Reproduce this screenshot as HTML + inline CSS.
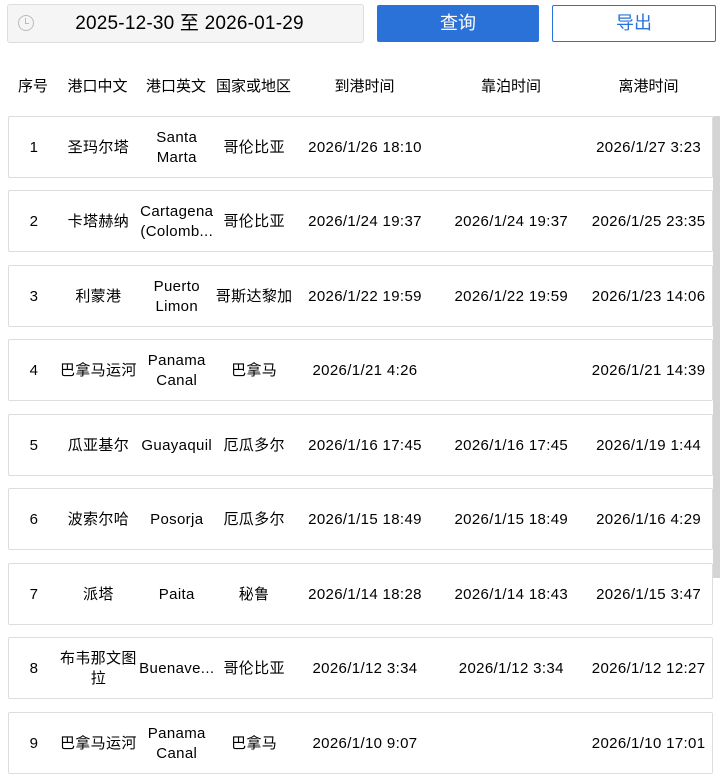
<!DOCTYPE html>
<html><head><meta charset="utf-8"><style>
*{box-sizing:border-box;margin:0;padding:0}
body{width:722px;height:779px;overflow:hidden;background:#fff;font-family:"Liberation Sans","Noto Sans CJK SC",sans-serif;color:#000;font-size:15px;position:relative}
.date{position:absolute;left:7px;top:4px;width:357px;height:39px;background:#f5f5f5;border:1px solid #ddd;border-radius:3px;font-size:19px;line-height:37px;text-align:center;padding-left:8px;letter-spacing:0.2px}
.clock{position:absolute;left:10px;top:10px;width:16px;height:16px;border:1.5px solid #bbb;border-radius:50%}
.clock:after{content:"";position:absolute;left:6px;top:2px;width:3px;height:5px;border-left:1.5px solid #bbb;border-bottom:1.5px solid #bbb}
.btn{position:absolute;top:5px;height:37px;border-radius:2px;font-size:18px;line-height:35px;text-align:center}
.q{left:377px;width:162px;background:#2a72d8;color:#fff;border:1px solid #2a72d8}
.e{left:552px;width:164px;background:#fff;color:#2a72d8;border:1px solid #2a72d8}
.row{position:absolute;left:8px;width:705px;display:flex;align-items:center}
.card{height:62px;border:1px solid #ddd;border-radius:2px;background:#fff;letter-spacing:0.35px;padding-top:2px}
.row div{text-align:center;line-height:20px;overflow:hidden;white-space:nowrap}
.c1{width:50px}.c2{width:79px}.c3{width:78px}.c4{width:77px}.c5{width:145px}.c6{width:148px}.c7{width:127px}
.hd{top:76px;height:22px}
.sb{position:absolute;left:713px;top:116px;width:7px;height:462px;background:#d4d4d4}
</style></head><body>
<div class="date"><span class="clock"></span>2025-12-30 至 2026-01-29</div>
<div class="btn q">查询</div>
<div class="btn e">导出</div>
<div class="row hd"><div class="c1">序号</div><div class="c2">港口中文</div><div class="c3">港口英文</div><div class="c4">国家或地区</div><div class="c5">到港时间</div><div class="c6">靠泊时间</div><div class="c7">离港时间</div></div>

<div class="row card" style="top:116px"><div class="c1">1</div><div class="c2">圣玛尔塔</div><div class="c3">Santa<br>Marta</div><div class="c4">哥伦比亚</div><div class="c5">2026/1/26 18:10</div><div class="c6"></div><div class="c7">2026/1/27 3:23</div></div>
<div class="row card" style="top:190px"><div class="c1">2</div><div class="c2">卡塔赫纳</div><div class="c3">Cartagena<br>(Colomb...</div><div class="c4">哥伦比亚</div><div class="c5">2026/1/24 19:37</div><div class="c6">2026/1/24 19:37</div><div class="c7">2026/1/25 23:35</div></div>
<div class="row card" style="top:265px"><div class="c1">3</div><div class="c2">利蒙港</div><div class="c3">Puerto<br>Limon</div><div class="c4">哥斯达黎加</div><div class="c5">2026/1/22 19:59</div><div class="c6">2026/1/22 19:59</div><div class="c7">2026/1/23 14:06</div></div>
<div class="row card" style="top:339px"><div class="c1">4</div><div class="c2">巴拿马运河</div><div class="c3">Panama<br>Canal</div><div class="c4">巴拿马</div><div class="c5">2026/1/21 4:26</div><div class="c6"></div><div class="c7">2026/1/21 14:39</div></div>
<div class="row card" style="top:414px"><div class="c1">5</div><div class="c2">瓜亚基尔</div><div class="c3">Guayaquil</div><div class="c4">厄瓜多尔</div><div class="c5">2026/1/16 17:45</div><div class="c6">2026/1/16 17:45</div><div class="c7">2026/1/19 1:44</div></div>
<div class="row card" style="top:488px"><div class="c1">6</div><div class="c2">波索尔哈</div><div class="c3">Posorja</div><div class="c4">厄瓜多尔</div><div class="c5">2026/1/15 18:49</div><div class="c6">2026/1/15 18:49</div><div class="c7">2026/1/16 4:29</div></div>
<div class="row card" style="top:563px"><div class="c1">7</div><div class="c2">派塔</div><div class="c3">Paita</div><div class="c4">秘鲁</div><div class="c5">2026/1/14 18:28</div><div class="c6">2026/1/14 18:43</div><div class="c7">2026/1/15 3:47</div></div>
<div class="row card" style="top:637px"><div class="c1">8</div><div class="c2">布韦那文图<br>拉</div><div class="c3">Buenave...</div><div class="c4">哥伦比亚</div><div class="c5">2026/1/12 3:34</div><div class="c6">2026/1/12 3:34</div><div class="c7">2026/1/12 12:27</div></div>
<div class="row card" style="top:712px"><div class="c1">9</div><div class="c2">巴拿马运河</div><div class="c3">Panama<br>Canal</div><div class="c4">巴拿马</div><div class="c5">2026/1/10 9:07</div><div class="c6"></div><div class="c7">2026/1/10 17:01</div></div>
<div class="sb"></div>
</body></html>
